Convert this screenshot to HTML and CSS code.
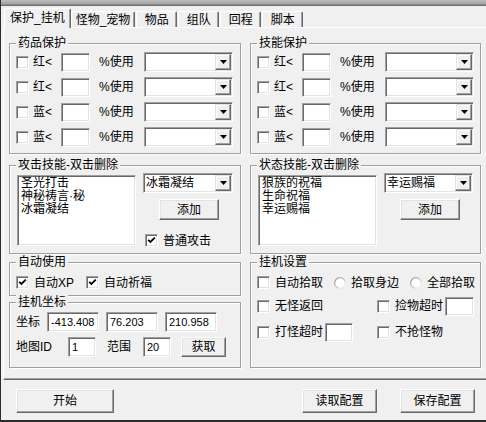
FILE: index.html
```html
<!DOCTYPE html>
<html lang="zh-CN">
<head>
  <meta charset="UTF-8">
  <title>保护_挂机</title>
  <link rel="stylesheet" href="styles.css">
</head>
<body>
  <svg class="defs" width="0" height="0">
    <defs>
      <linearGradient id="radioRing" x1="0" y1="0" x2="1" y2="1">
        <stop offset="0" stop-color="#8c8c8c"/>
        <stop offset="0.5" stop-color="#c8c8c8"/>
        <stop offset="1" stop-color="#ffffff"/>
      </linearGradient>
    </defs>
  </svg>

  <div class="window">
    <div class="titlebar"></div>

    <div class="tabs">
      <div class="tab active">保护_挂机</div>
      <div class="tab">怪物_宠物</div>
      <div class="tab">物品</div>
      <div class="tab">组队</div>
      <div class="tab">回程</div>
      <div class="tab">脚本</div>
    </div>

    <div class="panel">
      <!-- left column -->
      <div class="col">
        <div class="group g-protect">
          <div class="legend">药品保护</div>
          <div class="prow">
            <span class="cb"></span><span class="plabel">红&lt;</span>
            <span class="field w29"></span><span class="pct">%使用</span>
            <div class="combo"><span class="combo-text"></span><span class="combo-btn"><svg width="7" height="4" viewBox="0 0 7 4"><path d="M0 0h7L3.5 4z" fill="#000"/></svg></span></div>
          </div>
          <div class="prow">
            <span class="cb"></span><span class="plabel">红&lt;</span>
            <span class="field w29"></span><span class="pct">%使用</span>
            <div class="combo"><span class="combo-text"></span><span class="combo-btn"><svg width="7" height="4" viewBox="0 0 7 4"><path d="M0 0h7L3.5 4z" fill="#000"/></svg></span></div>
          </div>
          <div class="prow">
            <span class="cb"></span><span class="plabel">蓝&lt;</span>
            <span class="field w29"></span><span class="pct">%使用</span>
            <div class="combo"><span class="combo-text"></span><span class="combo-btn"><svg width="7" height="4" viewBox="0 0 7 4"><path d="M0 0h7L3.5 4z" fill="#000"/></svg></span></div>
          </div>
          <div class="prow">
            <span class="cb"></span><span class="plabel">蓝&lt;</span>
            <span class="field w29"></span><span class="pct">%使用</span>
            <div class="combo"><span class="combo-text"></span><span class="combo-btn"><svg width="7" height="4" viewBox="0 0 7 4"><path d="M0 0h7L3.5 4z" fill="#000"/></svg></span></div>
          </div>
        </div>

        <div class="group g-skill">
          <div class="legend">攻击技能-双击删除</div>
          <div class="skill-body">
            <div class="listbox">
              <div>圣光打击</div>
              <div>神秘祷言·秘</div>
              <div>冰霜凝结</div>
            </div>
            <div class="skill-side">
              <div class="combo wide"><span class="combo-text">冰霜凝结</span><span class="combo-btn"><svg width="7" height="4" viewBox="0 0 7 4"><path d="M0 0h7L3.5 4z" fill="#000"/></svg></span></div>
              <div class="btn add">添加</div>
              <label class="chk attack-chk"><span class="cb"><svg width="9" height="9" viewBox="0 0 9 9"><path d="M1.2 3.8l2.2 2.2 4.4-4.4" fill="none" stroke="#000" stroke-width="1.8"/></svg></span>普通攻击</label>
            </div>
          </div>
        </div>

        <div class="group g-auto">
          <div class="legend">自动使用</div>
          <div class="chk-row">
            <label class="chk"><span class="cb"><svg width="9" height="9" viewBox="0 0 9 9"><path d="M1.2 3.8l2.2 2.2 4.4-4.4" fill="none" stroke="#000" stroke-width="1.8"/></svg></span>自动XP</label>
            <label class="chk"><span class="cb"><svg width="9" height="9" viewBox="0 0 9 9"><path d="M1.2 3.8l2.2 2.2 4.4-4.4" fill="none" stroke="#000" stroke-width="1.8"/></svg></span>自动祈福</label>
          </div>
        </div>

        <div class="group g-coord">
          <div class="legend">挂机坐标</div>
          <div class="coord-row first">
            <span class="clabel">坐标</span>
            <span class="field w52">-413.408</span>
            <span class="field w52">76.203</span>
            <span class="field w52">210.958</span>
          </div>
          <div class="coord-row">
            <span class="maplabel">地图ID</span>
            <span class="field w28">1</span>
            <span class="rlabel">范围</span>
            <span class="field w28">20</span>
            <div class="btn fetch">获取</div>
          </div>
        </div>
      </div>

      <!-- right column -->
      <div class="col">
        <div class="group g-protect">
          <div class="legend">技能保护</div>
          <div class="prow">
            <span class="cb"></span><span class="plabel">红&lt;</span>
            <span class="field w29"></span><span class="pct">%使用</span>
            <div class="combo"><span class="combo-text"></span><span class="combo-btn"><svg width="7" height="4" viewBox="0 0 7 4"><path d="M0 0h7L3.5 4z" fill="#000"/></svg></span></div>
          </div>
          <div class="prow">
            <span class="cb"></span><span class="plabel">红&lt;</span>
            <span class="field w29"></span><span class="pct">%使用</span>
            <div class="combo"><span class="combo-text"></span><span class="combo-btn"><svg width="7" height="4" viewBox="0 0 7 4"><path d="M0 0h7L3.5 4z" fill="#000"/></svg></span></div>
          </div>
          <div class="prow">
            <span class="cb"></span><span class="plabel">蓝&lt;</span>
            <span class="field w29"></span><span class="pct">%使用</span>
            <div class="combo"><span class="combo-text"></span><span class="combo-btn"><svg width="7" height="4" viewBox="0 0 7 4"><path d="M0 0h7L3.5 4z" fill="#000"/></svg></span></div>
          </div>
          <div class="prow">
            <span class="cb"></span><span class="plabel">蓝&lt;</span>
            <span class="field w29"></span><span class="pct">%使用</span>
            <div class="combo"><span class="combo-text"></span><span class="combo-btn"><svg width="7" height="4" viewBox="0 0 7 4"><path d="M0 0h7L3.5 4z" fill="#000"/></svg></span></div>
          </div>
        </div>

        <div class="group g-skill">
          <div class="legend">状态技能-双击删除</div>
          <div class="skill-body">
            <div class="listbox">
              <div>狼族的祝福</div>
              <div>生命祝福</div>
              <div>幸运赐福</div>
            </div>
            <div class="skill-side">
              <div class="combo"><span class="combo-text">幸运赐福</span><span class="combo-btn"><svg width="7" height="4" viewBox="0 0 7 4"><path d="M0 0h7L3.5 4z" fill="#000"/></svg></span></div>
              <div class="btn add">添加</div>
            </div>
          </div>
        </div>

        <div class="group g-idle">
          <div class="legend">挂机设置</div>
          <div class="chk-row pick">
            <label class="chk"><span class="cb"></span>自动拾取</label>
            <label class="chk"><svg class="radio" width="12" height="12" viewBox="0 0 12 12"><circle cx="6" cy="6" r="5.3" fill="#fff" stroke="url(#radioRing)" stroke-width="1.2"/></svg>拾取身边</label>
            <label class="chk"><svg class="radio" width="12" height="12" viewBox="0 0 12 12"><circle cx="6" cy="6" r="5.3" fill="#fff" stroke="url(#radioRing)" stroke-width="1.2"/></svg>全部拾取</label>
          </div>
          <div class="opt-grid">
            <label class="chk"><span class="cb"></span>无怪返回</label>
            <label class="chk"><span class="cb"></span>捡物超时<span class="field w29 tight"></span></label>
            <label class="chk"><span class="cb"></span>打怪超时<span class="field w28 tight"></span></label>
            <label class="chk"><span class="cb"></span>不抢怪物</label>
          </div>
        </div>
      </div>
    </div>

    <div class="footer">
      <div class="btn start">开始</div>
      <div class="btn cfg load">读取配置</div>
      <div class="btn cfg">保存配置</div>
    </div>

    <div class="desk"></div>
  </div>
</body>
</html>
```

FILE: styles.css
```css
* {
  box-sizing: border-box;
}

body {
  margin: 0;
  background: #f0f0f0;
  color: #000;
  font: 12px/14px "Liberation Sans", "Noto Sans CJK SC", sans-serif;
}

.defs {
  position: absolute;
}

.window {
  width: 486px;
  height: 422px;
  overflow: hidden;
  border-left: 1px solid #2b2f27;
  display: flex;
  flex-direction: column;
}

.titlebar {
  flex: none;
  height: 6px;
  background: linear-gradient(to bottom, #bdbdbd, #a2a2a2 65%, #5c5c5c);
}

/* tab strip */
.tabs {
  flex: none;
  height: 21px;
  display: flex;
  align-items: flex-end;
  padding-left: 3px;
}

.tab {
  height: 16px;
  min-width: 41px;
  padding: 0 4px;
  margin-left: 1px;
  line-height: 16px;
  text-align: center;
  white-space: nowrap;
  border: 1px solid;
  border-color: #fff #696969 transparent #fff;
  border-bottom: 0;
  border-radius: 2px 2px 0 0;
  box-shadow: inset -1px 0 0 #a0a0a0;
}

.tab.active {
  position: relative;
  z-index: 1;
  height: 20px;
  margin: 0 0 -1px 0;
  padding: 0 5px;
  line-height: 18px;
  background: #f0f0f0;
}

.tab.active + .tab {
  margin-left: 0;
}

.panel {
  flex: none;
  height: 353px;
  margin-left: 2px;
  padding: 15px 0 0 5px;
  border-top: 1px solid #fff;
  border-left: 1px solid #fff;
  border-bottom: 1px solid #696969;
  box-shadow: inset 0 -1px 0 #a0a0a0;
  display: grid;
  grid-template-columns: 232px 231px;
  column-gap: 9px;
  align-content: start;
}

.col {
  display: flex;
  flex-direction: column;
}

/* etched group box */
.group {
  border: 1px solid #a0a0a0;
  box-shadow: inset 1px 1px 0 #fff, 1px 1px 0 #fff;
}

.legend {
  width: fit-content;
  height: 14px;
  margin: -8px 0 0 6px;
  padding: 0 2px;
  background: #f0f0f0;
  white-space: nowrap;
}

.g-protect { height: 111px; }
.g-skill   { height: 89px; margin-top: 11px; }
.g-auto    { height: 34px; margin-top: 8px; }
.g-coord   { height: 66px; margin-top: 6px; }
.g-idle    { height: 106px; margin-top: 8px; }

/* classic controls */
.cb {
  flex: none;
  width: 13px;
  height: 13px;
  background: #fff;
  border: 1px solid;
  border-color: #a0a0a0 #fff #fff #a0a0a0;
  box-shadow: inset 1px 1px 0 #696969, inset -1px -1px 0 #e3e3e3;
  display: flex;
  align-items: center;
  justify-content: center;
}

.field {
  flex: none;
  height: 19px;
  padding: 0 3px;
  background: #fff;
  border: 1px solid;
  border-color: #a0a0a0 #fff #fff #a0a0a0;
  box-shadow: inset 1px 1px 0 #696969, inset -1px -1px 0 #e3e3e3;
  font-size: 11px;
  line-height: 17px;
  white-space: nowrap;
}

.w28 { width: 28px; }
.w29 { width: 29px; }
.w52 { width: 52px; }

.combo {
  flex: none;
  width: 89px;
  height: 20px;
  padding: 1px;
  display: flex;
  background: #fff;
  border: 1px solid;
  border-color: #a0a0a0 #fff #fff #a0a0a0;
  box-shadow: inset 1px 1px 0 #696969, inset -1px -1px 0 #e3e3e3;
}

.combo.wide {
  width: 90px;
}

.combo-text {
  flex: 1;
  padding-left: 1px;
  line-height: 16px;
  white-space: nowrap;
  overflow: hidden;
}

.combo-btn {
  flex: none;
  width: 16px;
  height: 16px;
  display: flex;
  align-items: center;
  justify-content: center;
  background: #f0f0f0;
  border: 1px solid;
  border-color: #e3e3e3 #696969 #696969 #e3e3e3;
  box-shadow: inset -1px -1px 0 #a0a0a0, inset 1px 1px 0 #fff;
}

.btn {
  display: flex;
  align-items: center;
  justify-content: center;
  background: #f0f0f0;
  border: 1px solid;
  border-color: #fff #696969 #696969 #fff;
  box-shadow: inset -1px -1px 0 #a0a0a0, inset 1px 1px 0 #e3e3e3;
  white-space: nowrap;
}

.chk {
  display: flex;
  align-items: center;
  gap: 5px;
  white-space: nowrap;
}

.radio {
  flex: none;
}

/* potion / skill protect rows */
.prow {
  height: 20px;
  margin-left: 6px;
  display: flex;
  align-items: center;
}

.legend + .prow {
  margin-top: 2px;
}

.prow + .prow {
  margin-top: 5px;
}

.plabel {
  width: 28px;
  margin-left: 4px;
}

.pct {
  width: 45px;
  margin-left: 9px;
}

/* skill lists */
.skill-body {
  display: flex;
  margin-top: 1px;
  padding-left: 7px;
}

.listbox {
  width: 119px;
  height: 71px;
  margin-top: 2px;
  padding: 1px 3px;
  background: #fff;
  border: 1px solid;
  border-color: #a0a0a0 #fff #fff #a0a0a0;
  box-shadow: inset 1px 1px 0 #696969, inset -1px -1px 0 #e3e3e3;
  line-height: 13px;
  white-space: nowrap;
}

.skill-side {
  margin-left: 7px;
  display: flex;
  flex-direction: column;
  align-items: flex-start;
}

.btn.add {
  width: 60px;
  height: 21px;
  margin: 6px 0 0 16px;
}

.attack-chk {
  height: 13px;
  margin: 14px 0 0 2px;
}

/* check rows */
.chk-row {
  height: 13px;
  margin: 7px 0 0 6px;
  display: flex;
  align-items: center;
  gap: 12px;
}

.chk-row.pick {
  gap: 11px;
}

.opt-grid {
  margin: 7px 0 0 6px;
  display: grid;
  grid-template-columns: 120px auto;
  grid-auto-rows: 20px;
  row-gap: 6px;
}

.field.tight {
  margin-left: -3px;
}

/* coordinates */
.coord-row {
  height: 20px;
  margin: 5px 0 0 6px;
  display: flex;
  align-items: center;
  gap: 7px;
}

.coord-row.first {
  margin-top: 3px;
}

.coord-row .field {
  height: 20px;
  line-height: 18px;
}

.clabel {
  width: 24px;
}

.maplabel {
  width: 45px;
}

.rlabel {
  width: 29px;
  margin-left: 4px;
}

.btn.fetch {
  width: 45px;
  height: 20px;
  margin-left: 3px;
}

/* bottom buttons */
.footer {
  flex: none;
  height: 40px;
  padding: 9px 11px 0 15px;
  display: flex;
  align-items: flex-start;
}

.btn.start {
  width: 98px;
  height: 24px;
}

.btn.cfg {
  width: 75px;
  height: 24px;
  margin-left: 23px;
}

.btn.load {
  margin-left: auto;
}

.desk {
  flex: none;
  height: 2px;
  background: #2a2b24;
}
```
